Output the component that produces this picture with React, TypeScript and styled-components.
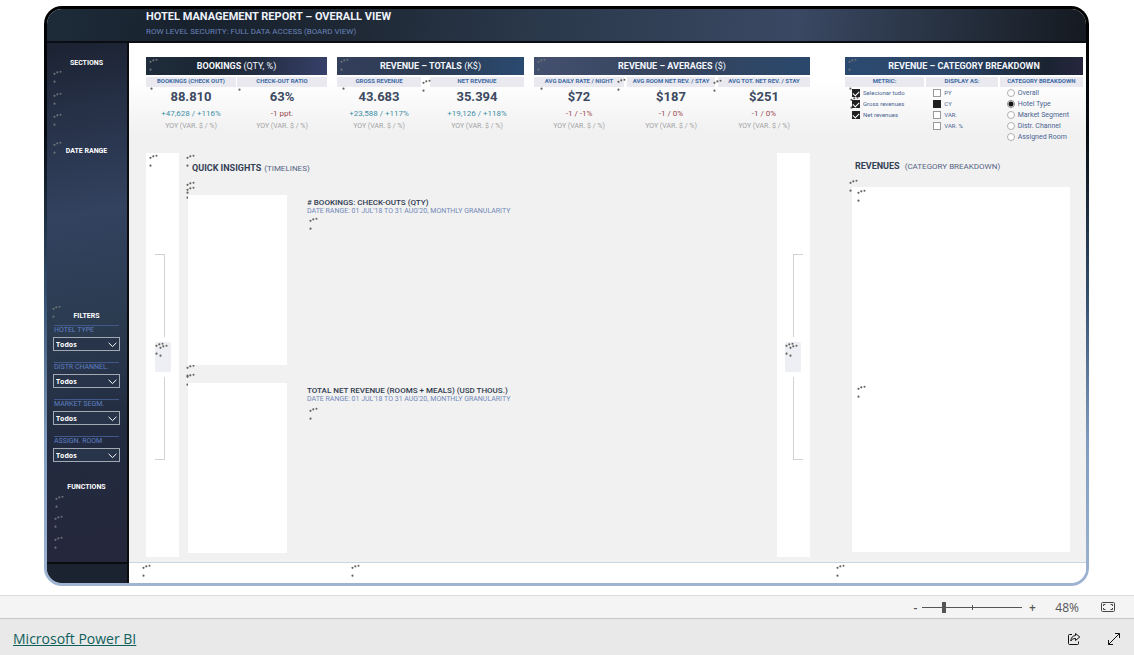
import React from "react";
import styled, { createGlobalStyle } from "styled-components";

const GlobalStyle = createGlobalStyle`
  * { box-sizing: border-box; }
  body { margin: 0; background: #fff; font-family: Roboto, "Liberation Sans", sans-serif; }
  h1, h2, h3, p { margin: 0; }
  button { font: inherit; cursor: pointer; }
`;

const Page = styled.div`
  min-height: 100vh;
  display: flex;
  flex-direction: column;
`;

const Stage = styled.main`
  flex: 1;
  display: flex;
  flex-direction: column;
  padding: 6px 45px 9px 44px;
`;

const Frame = styled.div`
  flex: 1;
  display: flex;
  padding: 3px;
  border-radius: 18px;
  background: linear-gradient(180deg, #000 0%, #070c12 22%, #34506f 50%, #7f9cc0 75%, #9fb4d2 100%);
`;

const Report = styled.div`
  flex: 1;
  display: flex;
  flex-direction: column;
  border-radius: 15px;
  overflow: hidden;
  background: #fff;
`;

const ReportHeader = styled.header`
  height: 34px;
  padding-left: 99px;
  border-bottom: 2px solid #0b0d12;
  background: linear-gradient(95deg, #1d2b38 0%, #18222e 14%, #1f2936 30%, #2b394c 48%, #3a4863 72%, #2a3546 84%, #151a21 100%);
`;

const ReportTitle = styled.h1`
  font-size: 11px;
  line-height: 16px;
  font-weight: 700;
  color: #eef2fa;
`;

const ReportSubtitle = styled.p`
  font-size: 8px;
  line-height: 14px;
  color: #6a82b8;
`;

const ReportBody = styled.div`
  flex: 1;
  display: flex;
`;

const Sidebar = styled.aside`
  width: 82px;
  display: flex;
  flex-direction: column;
  border-right: 2px solid #0a0c10;
  background: linear-gradient(170deg, #1b2231 0%, #252f45 12%, #33425f 32%, #2b3b50 52%, #222b40 72%, #25263a 100%);
`;

const SidebarSections = styled.div`
  flex: 1;
  padding: 14px 7px 0 6px;
`;

const SidebarSection = styled.section<{ $height: number }>`
  position: relative;
  min-height: ${(p) => p.$height}px;
`;

const SidebarTitle = styled.h2`
  font-size: 7px;
  line-height: 12px;
  font-weight: 700;
  text-align: center;
  color: #fff;
`;

const SidebarFoot = styled.div`
  height: 21px;
  border-top: 2px solid #0a0c10;
  background: #1a232f;
`;

const FilterList = styled.div`
  display: flex;
  flex-direction: column;
  gap: 11px;
  padding-top: 3px;
`;

const Filter = styled.div`
  display: flex;
  flex-direction: column;
`;

const FilterLabel = styled.label`
  margin: 0 1px;
  padding-bottom: 2px;
  border-top: 1px solid #41598a;
  font-size: 7px;
  line-height: 9px;
  color: #5f7fc0;
`;

const SelectBox = styled.div`
  position: relative;
  display: flex;

  svg {
    position: absolute;
    right: 3px;
    top: 5px;
    pointer-events: none;
  }
`;

const Select = styled.select`
  width: 100%;
  height: 14px;
  padding: 0 2px;
  appearance: none;
  border: 1px solid #a2a9b3;
  border-radius: 0;
  background: #273449;
  color: #fff;
  font: 700 7px "Open Sans", sans-serif;
`;

const Content = styled.div`
  flex: 1;
  min-width: 0;
  display: flex;
  flex-direction: column;
  background: linear-gradient(180deg, #fff 0, #fff 38px, #f1f1f1 90px);
`;

const Board = styled.div`
  flex: 1;
  display: grid;
  grid-template-columns: 664fr 238fr;
  grid-template-rows: 96px 1fr;
  column-gap: 35px;
  padding: 14px 3px 5px 17px;
`;

const ContentFoot = styled.footer`
  position: relative;
  height: 21px;
  border-top: 1px solid #c6d6e2;
  background: #fff;
`;

const CardRow = styled.div`
  display: grid;
  grid-template-columns: 181fr 187fr 276fr;
  column-gap: 10px;
`;

const Card = styled.section``;

const CardHeader = styled.h2<{ $fill: string }>`
  position: relative;
  height: 18px;
  line-height: 18px;
  font-size: 9px;
  font-weight: 700;
  text-align: center;
  color: #f3f6fc;
  background: ${(p) => p.$fill};

  span { font-weight: 400; }
`;

const CardGrid = styled.div<{ $columns: string; $gap: number }>`
  display: grid;
  grid-template-columns: ${(p) => p.$columns};
  column-gap: ${(p) => p.$gap}px;
  padding-top: 2px;
`;

const Metric = styled.div`
  position: relative;
  text-align: center;
  white-space: nowrap;
`;

const ColumnLabel = styled.h3`
  position: relative;
  height: 10px;
  line-height: 8px;
  font-size: 6px;
  font-weight: 700;
  text-align: center;
  color: #3f6ca6;
  background: #e9e9ef;
`;

const MetricValue = styled.p`
  margin-top: 2px;
  font-size: 13px;
  line-height: 16px;
  font-weight: 700;
  color: #3d4a61;
`;

const MetricDelta = styled.p<{ $down?: boolean }>`
  margin-top: 3px;
  font-size: 8px;
  line-height: 12px;
  color: ${(p) => (p.$down ? "#9b4a4c" : "#3f8fa8")};
`;

const MetricNote = styled.p`
  font-size: 7px;
  line-height: 12px;
  color: #a3a3a5;
`;

const Options = styled.fieldset`
  position: relative;
  min-width: 0;
  margin: 0;
  padding: 0;
  border: 0;
`;

const OptionList = styled.div`
  display: flex;
  flex-direction: column;
  padding-left: 7px;
`;

const Option = styled.label<{ $size: number }>`
  position: relative;
  display: flex;
  align-items: center;
  gap: 3px;
  height: 11px;
  font-size: ${(p) => p.$size}px;
  white-space: nowrap;
  color: #4a6492;
`;

const Tick = styled.input<{ $solid?: boolean }>`
  appearance: none;
  flex: none;
  width: 8px;
  height: 8px;
  margin: 0;
  display: grid;
  place-items: center;
  border: 1px solid #9a9a9a;
  background: #fff;

  &:checked {
    border-color: #222;
    background: #1f1f1f;
  }

  &[type="checkbox"]:checked::before {
    content: "";
    display: ${(p) => (p.$solid ? "none" : "block")};
    width: 5px;
    height: 3px;
    border: 0 solid #fff;
    border-width: 0 0 1px 1px;
    transform: rotate(-45deg);
  }

  &[type="radio"] {
    border-radius: 50%;
    border-color: #b0b0b0;
  }

  &[type="radio"]:checked {
    border-color: #8a8a8a;
    background: radial-gradient(circle, #111 0 2px, #fff 3px);
  }
`;

const Timelines = styled.section`
  display: grid;
  grid-template-columns: 33px 1fr 33px;
`;

const Strip = styled.div<{ $side: "left" | "right" }>`
  position: relative;
  display: flex;
  flex-direction: column;
  gap: 5px;
  padding: 101px 7px 0 ${(p) => (p.$side === "left" ? 9 : 8)}px;
  background: #fff;
`;

const Bracket = styled.div<{ $side: "left" | "right"; $edge: "top" | "bottom" }>`
  width: 10px;
  height: 83px;
  margin-left: ${(p) => (p.$side === "left" ? 0 : 8)}px;
  border: 0 solid #d2d2d2;
  border-${(p) => p.$edge}-width: 1px;
  border-${(p) => (p.$side === "left" ? "right" : "left")}-width: 1px;
`;

const StepButton = styled.button`
  position: relative;
  width: 16px;
  height: 30px;
  padding: 0;
  border: 0;
  border-radius: 2px;
  background: #eeeff4;
`;

const TimelineBody = styled.div`
  position: relative;
  padding: 8px 0 0 9px;
`;

const SectionTitle = styled.h2<{ $gap: number }>`
  display: flex;
  align-items: baseline;
  gap: ${(p) => p.$gap}px;
  font-size: 9px;
  line-height: 14px;
  font-weight: 700;
  color: #333f55;

  span { font-size: 8px; font-weight: 400; color: #566585; }
`;

const InsightsTitle = styled(SectionTitle)`
  padding: 0 0 19px 4px;
`;

const ChartList = styled.div`
  display: flex;
  flex-direction: column;
  gap: 18px;
`;

const ChartRow = styled.div`
  display: grid;
  grid-template-columns: 99px 1fr;
  column-gap: 20px;
  min-height: 170px;
`;

const Blank = styled.div`
  position: relative;
  background: #fff;
`;

const Chart = styled.div`
  position: relative;
  padding-top: 3px;
`;

const ChartTitle = styled.h3`
  font-size: 8px;
  line-height: 9px;
  font-weight: 500;
  color: #2f3a50;
`;

const ChartRange = styled.p`
  font-size: 7px;
  line-height: 8px;
  color: #7189b8;
`;

const Revenues = styled.section`
  position: relative;
  display: flex;
  flex-direction: column;
  padding: 6px 13px 5px 7px;
`;

const RevenuesTitle = styled(SectionTitle)`
  padding: 0 0 13px 3px;
`;

const RevenuesChart = styled(Blank)`
  flex: 1;
`;

const ZoomBar = styled.div`
  height: 24px;
  display: flex;
  align-items: center;
  justify-content: flex-end;
  padding-right: 19px;
  border-top: 1px solid #dcdcdc;
  border-bottom: 1px solid #c6c6c6;
  background: #f4f4f4;
  color: #555;
  font-family: "Open Sans", sans-serif;
  font-size: 12px;
`;

const BarButton = styled.button`
  display: flex;
  align-items: center;
  justify-content: center;
  min-width: 14px;
  padding: 0;
  border: 0;
  background: none;
  color: inherit;
`;

const StepSign = styled(BarButton)`
  font-weight: 600;
`;

const ZoomRange = styled.input`
  appearance: none;
  width: 100px;
  height: 12px;
  margin: 0 3px 0 0;
  background:
    linear-gradient(#555, #555) 50px 4px / 1px 5px no-repeat,
    linear-gradient(#555, #555) 0 6px / 100px 1px no-repeat;

  &::-webkit-slider-thumb {
    appearance: none;
    width: 4px;
    height: 11px;
    background: #555;
  }
`;

const ZoomValue = styled.output`
  margin: 0 22px 0 16px;
`;

const BrandBar = styled.footer`
  height: 36px;
  display: flex;
  align-items: center;
  justify-content: space-between;
  padding: 3px 13px 0 13px;
  background: #e9e9e9;
`;

const BrandLink = styled.a`
  font: 14px "Open Sans", sans-serif;
  color: #0f5f5c;
  text-decoration: underline;
`;

const BrandActions = styled.div`
  display: flex;
  gap: 26px;
`;

const LoaderMark = styled.svg<{ $x: number; $y: number; $dim?: boolean }>`
  position: absolute;
  left: ${(p) => p.$x}px;
  top: ${(p) => p.$y}px;
  width: 9px;
  height: 13px;
  fill: ${(p) => (p.$dim ? "#6c7077" : "#66645f")};
  pointer-events: none;
`;

/** Spinner dots left on a visual that is still loading. */
function Loader({ x, y, dim }: { x: number; y: number; dim?: boolean }) {
  return (
    <LoaderMark $x={x} $y={y} $dim={dim} viewBox="0 0 9 13" aria-hidden="true">
      <circle cx="1.5" cy="3.8" r="1.1" />
      <circle cx="4.3" cy="2.3" r="1.1" />
      <circle cx="7.5" cy="1.7" r="1" />
      <circle cx="1.5" cy="11.7" r="1.1" />
    </LoaderMark>
  );
}

const filters = ["HOTEL TYPE", "DISTR CHANNEL.", "MARKET SEGM.", "ASSIGN. ROOM"];

type MetricData = {
  label: string;
  value: string;
  delta: string;
  down?: boolean;
  loader: [number, number];
  over?: boolean;
};

type CardData = { title: string; unit: string; fill: string; columns: string; gap: number; metrics: MetricData[] };

const cards: CardData[] = [
  {
    title: "BOOKINGS",
    unit: "(QTY, %)",
    fill: "linear-gradient(100deg, #1f2d3c, #1a2531 35%, #252f45 65%, #37406a)",
    columns: "1fr 1fr",
    gap: 1,
    metrics: [
      { label: "BOOKINGS (CHECK OUT)", value: "88.810", delta: "+47,628 / +116%", loader: [4, 0] },
      { label: "CHECK-OUT RATIO", value: "63%", delta: "-1 ppt.", down: true, loader: [1, 1] },
    ],
  },
  {
    title: "REVENUE – TOTALS",
    unit: "(K$)",
    fill: "linear-gradient(100deg, #343f5b, #2c3b52 50%, #2a4a70)",
    columns: "84fr 94fr",
    gap: 9,
    metrics: [
      { label: "GROSS REVENUE", value: "43.683", delta: "+23,588 / +117%", loader: [5, 0] },
      { label: "NET REVENUE", value: "35.394", delta: "+19,126 / +118%", loader: [-8, 2], over: true },
    ],
  },
  {
    title: "REVENUE – AVERAGES",
    unit: "($)",
    fill: "linear-gradient(100deg, #44506f, #35435c 50%, #2a486c)",
    columns: "90fr 88fr 92fr",
    gap: 3,
    metrics: [
      { label: "AVG DAILY RATE / NIGHT", value: "$72", delta: "-1 / -1%", down: true, loader: [6, 0] },
      { label: "AVG ROOM NET REV. / STAY", value: "$187", delta: "-1 / 0%", down: true, loader: [-10, 1], over: true },
      { label: "AVG TOT. NET REV. / STAY", value: "$251", delta: "-1 / 0%", down: true, loader: [-5, 2], over: true },
    ],
  },
];

function MetricCard({ card }: { card: CardData }) {
  return (
    <Card>
      <CardHeader $fill={card.fill}>
        {card.title} <span>{card.unit}</span>
        <Loader x={3} y={1} dim />
      </CardHeader>
      <CardGrid $columns={card.columns} $gap={card.gap}>
        {card.metrics.map((m) => (
          <Metric key={m.label}>
            {!m.over && <Loader x={m.loader[0]} y={m.loader[1]} />}
            <ColumnLabel>{m.label}</ColumnLabel>
            <MetricValue>{m.value}</MetricValue>
            <MetricDelta $down={m.down}>{m.delta}</MetricDelta>
            <MetricNote>YOY (VAR. $ / %)</MetricNote>
            {m.over && <Loader x={m.loader[0]} y={m.loader[1]} />}
          </Metric>
        ))}
      </CardGrid>
    </Card>
  );
}

function TimelineStrip({ side }: { side: "left" | "right" }) {
  return (
    <Strip $side={side}>
      {side === "left" && <Loader x={3} y={1} />}
      <Bracket $side={side} $edge="top" />
      <StepButton aria-label={side === "left" ? "Previous view" : "Next view"}>
        <Loader x={0} y={0} />
        <Loader x={4} y={2} />
      </StepButton>
      <Bracket $side={side} $edge="bottom" />
    </Strip>
  );
}

export default function App() {
  return (
    <>
      <GlobalStyle />
      <Page>
        <Stage>
          <Frame>
            <Report>
              <ReportHeader>
                <ReportTitle>HOTEL MANAGEMENT REPORT – OVERALL VIEW</ReportTitle>
                <ReportSubtitle>ROW LEVEL SECURITY: FULL DATA ACCESS (BOARD VIEW)</ReportSubtitle>
              </ReportHeader>
              <ReportBody>
                <Sidebar>
                  <SidebarSections>
                    <SidebarSection $height={88}>
                      <SidebarTitle>SECTIONS</SidebarTitle>
                      <Loader x={0} y={13} dim />
                      <Loader x={0} y={35} dim />
                      <Loader x={0} y={56} dim />
                    </SidebarSection>
                    <SidebarSection $height={165}>
                      <SidebarTitle>DATE RANGE</SidebarTitle>
                      <Loader x={0} y={-4} dim />
                    </SidebarSection>
                    <SidebarSection $height={171}>
                      <SidebarTitle>FILTERS</SidebarTitle>
                      <Loader x={-1} y={-5} dim />
                      <FilterList>
                        {filters.map((name, i) => (
                          <Filter key={name}>
                            <FilterLabel htmlFor={`filter-${i}`}>{name}</FilterLabel>
                            <SelectBox>
                              <Select id={`filter-${i}`}>
                                <option>Todos</option>
                              </Select>
                              <svg width="9" height="6" viewBox="0 0 9 6" fill="none" stroke="#fff" aria-hidden="true">
                                <path d="M0.6 0.8 4.5 4.6 8.4 0.8" />
                              </svg>
                            </SelectBox>
                          </Filter>
                        ))}
                      </FilterList>
                    </SidebarSection>
                    <SidebarSection $height={70}>
                      <SidebarTitle>FUNCTIONS</SidebarTitle>
                      <Loader x={2} y={14} dim />
                      <Loader x={1} y={34} dim />
                      <Loader x={1} y={55} dim />
                    </SidebarSection>
                  </SidebarSections>
                  <SidebarFoot />
                </Sidebar>

                <Content>
                  <Board>
                    <CardRow>
                      {cards.map((card) => (
                        <MetricCard key={card.title} card={card} />
                      ))}
                    </CardRow>

                    <Card>
                      <CardHeader $fill="linear-gradient(100deg, #2c4a70, #2b4568 45%, #1a2431 84%, #27263f)">
                        REVENUE – CATEGORY BREAKDOWN
                        <Loader x={3} y={1} dim />
                      </CardHeader>
                      <CardGrid $columns="79fr 71fr 83fr" $gap={2}>
                        <Options>
                          <Loader x={4} y={0} />
                          <Loader x={5} y={19} />
                          <ColumnLabel>METRIC:</ColumnLabel>
                          <OptionList>
                            {["Selecionar tudo", "Gross revenues", "Net revenues"].map((name) => (
                              <Option key={name} $size={6}>
                                <Tick type="checkbox" defaultChecked />
                                {name}
                              </Option>
                            ))}
                          </OptionList>
                        </Options>
                        <Options>
                          <ColumnLabel>DISPLAY AS:</ColumnLabel>
                          <OptionList>
                            {["PY", "CY", "VAR.", "VAR. %"].map((name) => (
                              <Option key={name} $size={6}>
                                <Tick type="checkbox" $solid defaultChecked={name === "CY"} />
                                {name}
                              </Option>
                            ))}
                          </OptionList>
                        </Options>
                        <Options>
                          <ColumnLabel>CATEGORY BREAKDOWN</ColumnLabel>
                          <OptionList>
                            {["Overall", "Hotel Type", "Market Segment", "Distr. Channel", "Assigned Room"].map((name) => (
                              <Option key={name} $size={7}>
                                <Tick type="radio" name="category" defaultChecked={name === "Hotel Type"} />
                                {name}
                              </Option>
                            ))}
                          </OptionList>
                        </Options>
                      </CardGrid>
                    </Card>

                    <Timelines>
                      <TimelineStrip side="left" />
                      <TimelineBody>
                        <Loader x={7} y={1} />
                        <Loader x={7} y={28} />
                        <Loader x={7} y={33} />
                        <Loader x={7} y={211} />
                        <Loader x={7} y={220} />
                        <InsightsTitle $gap={3}>
                          QUICK INSIGHTS <span>(TIMELINES)</span>
                        </InsightsTitle>
                        <ChartList>
                          <ChartRow>
                            <Blank />
                            <Chart>
                              <ChartTitle># BOOKINGS: CHECK-OUTS (QTY)</ChartTitle>
                              <ChartRange>DATE RANGE: 01 JUL'18 TO 31 AUG'20, MONTHLY GRANULARITY</ChartRange>
                              <Loader x={2} y={22} />
                            </Chart>
                          </ChartRow>
                          <ChartRow>
                            <Blank />
                            <Chart>
                              <ChartTitle>TOTAL NET REVENUE (ROOMS + MEALS) (USD THOUS.)</ChartTitle>
                              <ChartRange>DATE RANGE: 01 JUL'18 TO 31 AUG'20, MONTHLY GRANULARITY</ChartRange>
                              <Loader x={2} y={24} />
                            </Chart>
                          </ChartRow>
                        </ChartList>
                      </TimelineBody>
                      <TimelineStrip side="right" />
                    </Timelines>

                    <Revenues>
                      <Loader x={4} y={26} />
                      <RevenuesTitle $gap={5}>
                        REVENUES <span>(CATEGORY BREAKDOWN)</span>
                      </RevenuesTitle>
                      <RevenuesChart>
                        <Loader x={5} y={2} />
                        <Loader x={5} y={198} />
                      </RevenuesChart>
                    </Revenues>
                  </Board>
                  <ContentFoot>
                    <Loader x={13} y={1} />
                    <Loader x={222} y={1} />
                    <Loader x={707} y={1} />
                  </ContentFoot>
                </Content>
              </ReportBody>
            </Report>
          </Frame>
        </Stage>

        <ZoomBar>
          <StepSign aria-label="Zoom out">-</StepSign>
          <ZoomRange type="range" aria-label="Zoom" min="0" max="100" defaultValue="20" />
          <StepSign aria-label="Zoom in">+</StepSign>
          <ZoomValue>48%</ZoomValue>
          <BarButton aria-label="Fit to page">
            <svg width="14" height="10" viewBox="0 0 14 10" fill="none" stroke="#444">
              <rect x="0.5" y="0.5" width="13" height="9" rx="1" />
              <path d="M2.5 4V2.5H4.5M9.5 2.5H11.5V4M11.5 6V7.5H9.5M4.5 7.5H2.5V6" />
            </svg>
          </BarButton>
        </ZoomBar>
        <BrandBar>
          <BrandLink href="#power-bi">Microsoft Power BI</BrandLink>
          <BrandActions>
            <BarButton aria-label="Share">
              <svg width="14" height="14" viewBox="0 0 14 14" fill="none" stroke="#111" strokeLinejoin="round">
                <path d="M5 2.5H2.5A1 1 0 0 0 1.5 3.5V11.5A1 1 0 0 0 2.5 12.5H10.5A1 1 0 0 0 11.5 11.5V9.5" />
                <path d="M8.5 1.5 12.8 5 8.5 8.5V6.5C6.3 6.5 5 7.2 3.8 9 4 5.8 5.6 3.7 8.5 3.5Z" />
              </svg>
            </BarButton>
            <BarButton aria-label="Full screen">
              <svg width="14" height="14" viewBox="0 0 14 14" fill="none" stroke="#111">
                <path d="M1.5 12.5 12.5 1.5M8 1.5H12.5V6M1.5 8V12.5H6" />
              </svg>
            </BarButton>
          </BrandActions>
        </BrandBar>
      </Page>
    </>
  );
}
